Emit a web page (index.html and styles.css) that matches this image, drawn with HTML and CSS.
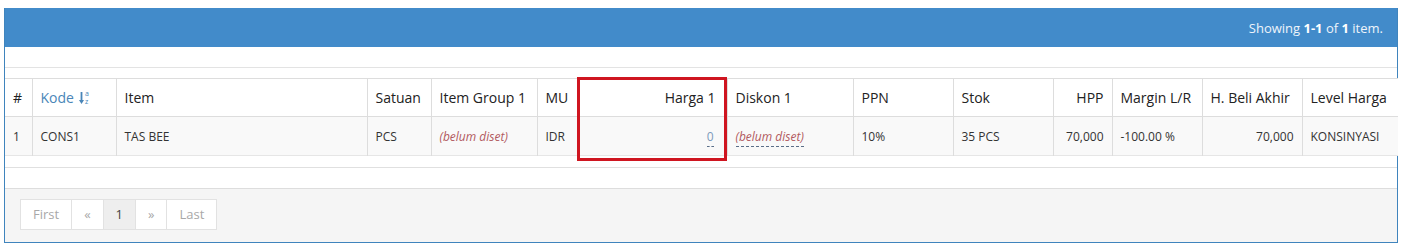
FILE: index.html
```html
<!DOCTYPE html>
<html lang="id">
<head>
<meta charset="utf-8">
<title>Daftar Harga</title>
<link rel="stylesheet" href="styles.css">
</head>
<body>
<div class="panel">
  <div class="panel-heading">
    <div class="summary">Showing <b>1-1</b> of <b>1</b> item.</div>
  </div>
  <div class="panel-before"></div>
  <div class="table-wrap">
    <table class="grid">
      <colgroup>
        <col class="w27"><col class="w84"><col class="w251"><col class="w64"><col class="w106"><col class="w40"><col class="w150"><col class="w126"><col class="w100"><col class="w100"><col class="w59"><col class="w90"><col class="w100"><col class="w96">
      </colgroup>
      <thead>
        <tr>
          <th>#</th>
          <th><a class="sort-link" href="#">Kode <span class="sort-icon"><svg width="11" height="16" viewBox="0 0 11 16"><path d="M2.5 2v10" stroke="#4a86b8" stroke-width="1.8" fill="none"/><path d="M0 10l2.5 4L5 10z" fill="#4a86b8"/><text x="6" y="6" class="sort-txt">a</text><text x="6" y="14" class="sort-txt">z</text></svg></span></a></th>
          <th>Item</th>
          <th>Satuan</th>
          <th>Item Group 1</th>
          <th>MU</th>
          <th class="r harga">Harga 1</th>
          <th>Diskon 1</th>
          <th>PPN</th>
          <th>Stok</th>
          <th class="r">HPP</th>
          <th>Margin L/R</th>
          <th>H. Beli Akhir</th>
          <th>Level Harga</th>
        </tr>
      </thead>
      <tbody>
        <tr>
          <td>1</td>
          <td>CONS1</td>
          <td>TAS BEE</td>
          <td>PCS</td>
          <td><span class="unset">(belum diset)</span></td>
          <td>IDR</td>
          <td class="r harga"><a class="editable zero" href="#">0</a></td>
          <td><a class="editable unset" href="#">(belum diset)</a></td>
          <td>10%</td>
          <td>35 PCS</td>
          <td class="r">70,000</td>
          <td>-100.00 %</td>
          <td class="r">70,000</td>
          <td>KONSINYASI</td>
        </tr>
      </tbody>
    </table>
    <div class="highlight"></div>
  </div>
  <div class="panel-after"></div>
  <div class="panel-footer">
    <ul class="pagination">
      <li class="disabled"><span>First</span></li>
      <li class="disabled"><span>&laquo;</span></li>
      <li class="active"><span>1</span></li>
      <li class="disabled"><span>&raquo;</span></li>
      <li class="disabled"><span>Last</span></li>
    </ul>
  </div>
</div>
</body>
</html>
```

FILE: styles.css
```css
html, body {
  margin: 0;
  padding: 0;
  background: #ffffff;
}
body {
  font-family: "Open Sans", "Liberation Sans", sans-serif;
  color: #333333;
  padding: 8px 5px 0 4px;
}
.panel {
  border: 1px solid #3f84bd;
  border-top: 0;
  background: #ffffff;
}
.panel-heading {
  background: #428bca;
  height: 39px;
  display: flex;
  align-items: center;
  justify-content: flex-end;
  padding: 0 14px 0 15px;
}
.summary {
  color: #eef4fa;
  font-size: 13px;
  line-height: 18px;
}
.summary b {
  font-weight: 700;
  color: #ffffff;
}
.panel-before {
  height: 20px;
  border-bottom: 1px solid #e3e3e3;
}
.table-wrap {
  position: relative;
  padding-top: 10px;
  padding-bottom: 11px;
}
.grid {
  width: 100%;
  table-layout: fixed;
  border-collapse: collapse;
  border-top: 1px solid #dddddd;
  border-bottom: 1px solid #e6e6e6;
}
.w27 { width: 27px; }
.w84 { width: 84px; }
.w251 { width: 251px; }
.w64 { width: 64px; }
.w106 { width: 106px; }
.w40 { width: 40px; }
.w150 { width: 150px; }
.w126 { width: 126px; }
.w100 { width: 100px; }
.w59 { width: 59px; }
.w90 { width: 90px; }
.w96 { width: 96px; }
.grid th,
.grid td {
  border: 1px solid #dddddd;
  padding: 0 8px;
  text-align: left;
  white-space: nowrap;
  overflow: hidden;
}
.grid th:first-child,
.grid td:first-child { border-left: 0; }
.grid th:last-child,
.grid td:last-child { border-right: 0; }
.grid th {
  height: 37px;
  font-size: 14px;
  font-weight: 400;
  color: #222222;
  background: #ffffff;
  border-top: 0;
}
.grid td {
  height: 38px;
  font-size: 12px;
  color: #333333;
  background: #f9f9f9;
  border-bottom: 0;
}
.grid .r { text-align: right; }
.grid .harga { padding-right: 11px; }
.sort-link {
  color: #4a86b8;
  text-decoration: none;
  display: inline-flex;
  align-items: center;
  gap: 5px;
}
.sort-icon {
  display: inline-flex;
  align-items: center;
}
.sort-icon svg { display: block; }
.sort-txt {
  font-family: "Open Sans", "Liberation Sans", sans-serif;
  font-size: 7px;
  fill: #4a86b8;
}
.unset {
  font-style: italic;
  color: #b25a5f;
}
.editable {
  text-decoration: none;
  border-bottom: 1px dashed #5a6e88;
  padding-bottom: 1px;
}
.zero {
  color: #7c99bb;
  margin-right: 2px;
}
.highlight {
  position: absolute;
  left: 572px;
  top: 9px;
  width: 144px;
  height: 78px;
  border: 3px solid #cf1520;
  pointer-events: none;
}
.panel-after {
  height: 20px;
  border-top: 1px solid #e0e0e0;
}
.panel-footer {
  background: #f5f5f5;
  border-top: 1px solid #dddddd;
  padding: 10px 15px 12px;
}
.pagination {
  list-style: none;
  margin: 0;
  padding: 0;
  display: flex;
}
.pagination li span {
  display: block;
  font-size: 13px;
  line-height: 19px;
  padding: 5px 12px;
  border: 1px solid #e2e2e2;
  margin-left: -1px;
  background: #ffffff;
  color: #a8a8a8;
}
.pagination li:first-child span { margin-left: 0; }
.pagination li.active span {
  background: #eeeeee;
  color: #444444;
}
```
